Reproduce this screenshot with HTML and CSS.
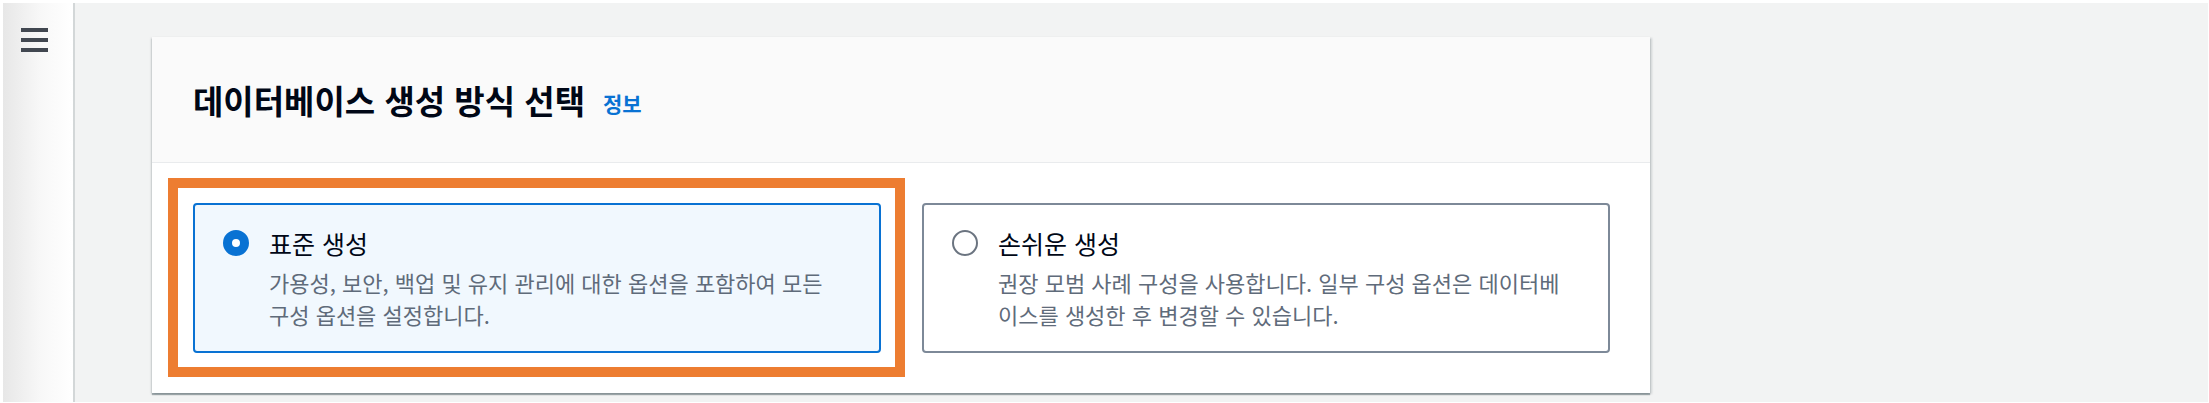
FILE: index.html
```html
<!DOCTYPE html>
<html lang="ko">
  <head>
    <meta charset="UTF-8" />
    <meta name="viewport" content="width=device-width, initial-scale=1.0" />
    <title>데이터베이스 생성</title>
    <link rel="stylesheet" href="styles.css">
  </head>
  <body>
    <div class="frame">
      <aside class="sidebar">
        <svg class="menu-icon" width="27" height="24" viewBox="0 0 27 24">
          <rect x="0" y="0" width="27" height="4" />
          <rect x="0" y="10" width="27" height="4" />
          <rect x="0" y="20" width="27" height="4" />
        </svg>
      </aside>
      <main class="content">
        <section class="panel">
          <header class="panel-header">
            <h2>데이터베이스 생성 방식 선택</h2>
            <a class="info-link" href="#">정보</a>
          </header>
          <div class="panel-body">
            <div class="tile-grid">
              <label class="tile selected highlight">
                <span class="radio checked"></span>
                <span class="tile-text">
                  <span class="tile-title">표준 생성</span>
                  <span class="tile-desc">가용성, 보안, 백업 및 유지 관리에 대한 옵션을 포함하여 모든<br>구성 옵션을 설정합니다.</span>
                </span>
              </label>
              <label class="tile">
                <span class="radio"></span>
                <span class="tile-text">
                  <span class="tile-title">손쉬운 생성</span>
                  <span class="tile-desc">권장 모범 사례 구성을 사용합니다. 일부 구성 옵션은 데이터베<br>이스를 생성한 후 변경할 수 있습니다.</span>
                </span>
              </label>
            </div>
          </div>
        </section>
      </main>
    </div>
  </body>
</html>
```

FILE: styles.css
```css
/* Basic layout */
body {
  margin: 0;
  background-color: #fff;
  font-family: "Noto Sans CJK KR", "Noto Sans", sans-serif;
}
.frame {
  display: flex;
  height: 403px;
  box-sizing: border-box;
  padding: 3px 1px 1px 3px;
}

/* Left navigation strip */
.sidebar {
  width: 72px;
  box-sizing: border-box;
  padding: 25px 0 0 18px;
  border-right: 2px solid #d3d7d8;
  background: linear-gradient(to right, #e7e7e7, #f8f8f8 55%, #fff);
}
.menu-icon {
  display: block;
  fill: #414750;
}

/* Main area */
.content {
  flex: 1;
  background-color: #f2f3f3;
  padding: 34px 0 0 77px;
}
.panel {
  width: 1498px;
  background-color: #fff;
  box-shadow: 0 2px 1px rgba(0, 28, 36, 0.3), 2px 1px 2px rgba(0, 28, 36, 0.15),
    -1px 1px 2px rgba(0, 28, 36, 0.15);
}
.panel-header {
  display: flex;
  align-items: center;
  height: 125px;
  padding-left: 41px;
  background-color: #fafafa;
  border-bottom: 1px solid #e9ebed;
}
.panel-header h2 {
  margin: 0;
  font-size: 33px;
  font-weight: 700;
  color: #000716;
}
.info-link {
  margin: 6px 0 0 18px;
  font-size: 21px;
  font-weight: 700;
  color: #0972d3;
  text-decoration: none;
}
.panel-body {
  padding: 40px 40px 40px 41px;
}

/* Radio tiles */
.tile-grid {
  display: grid;
  grid-template-columns: 1fr 1fr;
  gap: 41px;
}
.tile {
  position: relative;
  display: flex;
  gap: 20px;
  padding: 22px 28px 21px 28px;
  border: 2px solid #7d8998;
  border-radius: 4px;
  background-color: #fff;
}
.tile.selected {
  border-color: #0972d3;
  background-color: #f1f8fe;
}
/* orange annotation around the chosen option */
.tile.highlight::after {
  content: "";
  position: absolute;
  top: -27px;
  left: -27px;
  right: -26px;
  bottom: -26px;
  border: 10px solid #ed7d31;
}
.radio {
  flex: none;
  width: 26px;
  height: 26px;
  margin-top: 3px;
  box-sizing: border-box;
  border: 2px solid #6b7480;
  border-radius: 50%;
  background-color: #fff;
}
.radio.checked {
  border: 9px solid #0972d3;
}
.tile-text {
  display: flex;
  flex-direction: column;
}
.tile-title {
  font-size: 25px;
  line-height: 32px;
  color: #000716;
}
.tile-desc {
  margin-top: 7px;
  font-size: 22px;
  line-height: 32px;
  color: #5f6b7a;
  white-space: nowrap;
}
```
